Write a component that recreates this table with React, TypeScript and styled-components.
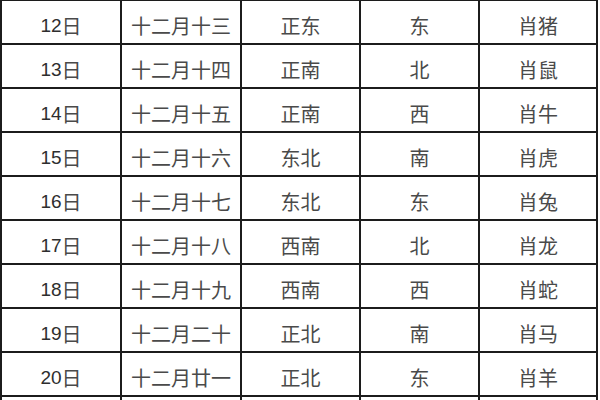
import React from 'react';
import styled, { createGlobalStyle } from 'styled-components';

const GlobalStyle = createGlobalStyle`
  html, body {
    margin: 0;
    padding: 0;
    background: #ffffff;
  }
  body {
    width: 600px;
    height: 400px;
    overflow: hidden;
  }
`;

const Sheet = styled.div`
  width: 600px;
  height: 400px;
  overflow: hidden;
  background: #ffffff;
`;

const Table = styled.div`
  margin-top: -1px;
  width: 598px;
  border-top: 2px solid #1c1c1c;
  border-left: 2px solid #1c1c1c;
  box-sizing: border-box;
`;

const Row = styled.div`
  display: grid;
  grid-template-columns: 120px 120px 119px 119px 118px;
  height: 44px;
`;

const Cell = styled.div`
  display: flex;
  align-items: center;
  justify-content: center;
  box-sizing: border-box;
  padding-top: 7px;
  border-right: 2px solid #1c1c1c;
  border-bottom: 2px solid #1c1c1c;
  color: #4a4a4a;
  font-family: 'Noto Sans CJK SC', sans-serif;
  font-size: 20px;
  line-height: 1;
  white-space: nowrap;
`;

const Num = styled.span`
  font-family: 'Liberation Sans', Arial, sans-serif;
  font-size: 19px;
  color: #2e2e2e;
`;

const rows = [
  ['12', '十二月十三', '正东', '东', '肖猪'],
  ['13', '十二月十四', '正南', '北', '肖鼠'],
  ['14', '十二月十五', '正南', '西', '肖牛'],
  ['15', '十二月十六', '东北', '南', '肖虎'],
  ['16', '十二月十七', '东北', '东', '肖兔'],
  ['17', '十二月十八', '西南', '北', '肖龙'],
  ['18', '十二月十九', '西南', '西', '肖蛇'],
  ['19', '十二月二十', '正北', '南', '肖马'],
  ['20', '十二月廿一', '正北', '东', '肖羊'],
];

export default function App() {
  return (
    <Sheet>
      <GlobalStyle />
      <Table>
        {rows.map(([day, lunar, fortune, wealth, clash]) => (
          <Row key={day}>
            <Cell>
              <Num>{day}</Num>日
            </Cell>
            <Cell>{lunar}</Cell>
            <Cell>{fortune}</Cell>
            <Cell>{wealth}</Cell>
            <Cell>{clash}</Cell>
          </Row>
        ))}
        {/* next row continues below the crop */}
        <Row>
          <Cell />
          <Cell />
          <Cell />
          <Cell />
          <Cell />
        </Row>
      </Table>
    </Sheet>
  );
}
